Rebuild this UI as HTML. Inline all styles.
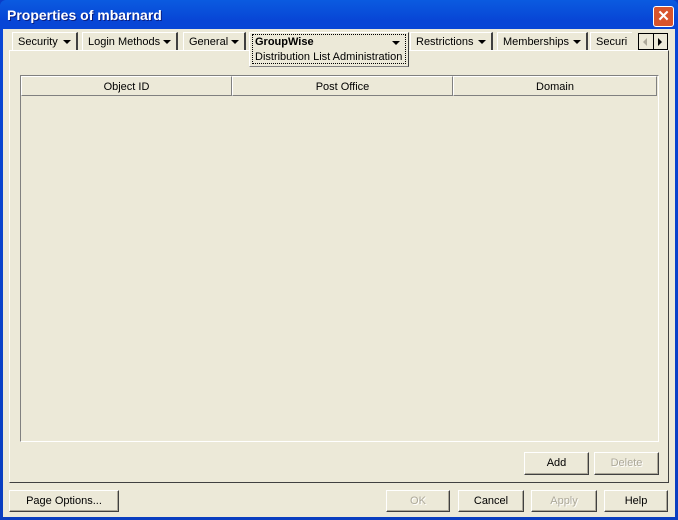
<html><head><style>
body{margin:0;width:678px;height:520px;overflow:hidden;font-family:"Liberation Sans",sans-serif;font-size:11px;background:#0a3cc8}
.win{position:absolute;left:0;top:0;width:678px;height:520px;background:linear-gradient(#0a5be0,#0846d6 20px,#0a3ec0);border-radius:6px 6px 0 0}
.title{position:absolute;left:7px;top:7px;color:#fff;font-weight:bold;font-size:14px;text-shadow:1px 1px #0a1e80}
.close{position:absolute;left:653px;top:6px;width:19px;height:19px;background:#d8542c;border:1px solid #fff;border-radius:3px;color:#fff;font-size:15px;text-align:center;line-height:19px;font-weight:bold}
.client{position:absolute;left:3px;top:29px;width:672px;height:488px;background:#ece9d8}
.abs{position:absolute}
.tab{position:absolute;top:3px;height:18px;border:1px solid #fff;border-right:2px solid #404040;border-bottom:none;background:#ece9d8;line-height:18px;padding-left:5px;box-sizing:border-box}
.tri{display:inline-block;width:0;height:0;border-left:4px solid transparent;border-right:4px solid transparent;border-top:4px solid #000;position:absolute;right:5px;top:7px}
.btn{position:absolute;background:#ece9d8;border:1px solid;border-color:#fff #404040 #404040 #fff;box-shadow:inset -1px -1px #aca899;text-align:center;box-sizing:border-box}
.hdr{position:absolute;top:0;height:20px;line-height:20px;text-align:center;border:1px solid;border-color:#fff #808080 #808080 #fff;box-sizing:border-box;background:#ece9d8}
.dis{color:#aca899;text-shadow:1px 1px #fff}
</style></head><body><div class="win">
<div class="title">Properties of mbarnard</div><div class="close">✕</div>
<div class="client">
<div class="abs" style="left:6px;top:21px;width:660px;height:433px;border:1px solid;border-color:#fff #404040 #404040 #fff;box-sizing:border-box"></div>
<div class="tab" style="left:9px;width:66px">Security<span class="tri"></span></div>
<div class="tab" style="left:79px;width:96px">Login Methods<span class="tri"></span></div>
<div class="tab" style="left:180px;width:63px">General<span class="tri"></span></div>
<div class="abs" style="left:246px;top:3px;width:160px;height:35px;background:#ece9d8;border:1px solid #fff;border-right:1px solid #404040;border-bottom:1px solid #808080;box-sizing:border-box"><div style="position:absolute;left:2px;top:1px;right:2px;bottom:2px;border:1px dotted #000"></div><b style="position:absolute;left:5px;top:3px">GroupWise</b><span class="tri" style="top:8px;right:8px"></span><span style="position:absolute;left:5px;top:18px">Distribution List Administration</span></div>
<div class="tab" style="left:407px;width:83px">Restrictions<span class="tri"></span></div>
<div class="tab" style="left:494px;width:91px">Memberships<span class="tri"></span></div>
<div class="tab" style="left:587px;width:42px;overflow:hidden;border-right:none">Securi</div>
<div class="abs" style="left:635px;top:4px;width:30px;height:17px;border:1px solid #000;background:#ece9d8;box-sizing:border-box"><div class="abs" style="left:14px;top:0;width:1px;height:15px;background:#000"></div>
<div class="abs" style="left:4px;top:4px;border-right:4px solid #aca899;border-top:4px solid transparent;border-bottom:4px solid transparent"></div>
<div class="abs" style="left:19px;top:4px;border-left:4px solid #000;border-top:4px solid transparent;border-bottom:4px solid transparent"></div></div>
<div class="abs" style="left:17px;top:46px;width:639px;height:367px;border:1px solid;border-color:#808080 #fff #fff #808080;box-sizing:border-box">
<div class="hdr" style="left:0;width:211px">Object ID</div>
<div class="hdr" style="left:211px;width:221px">Post Office</div>
<div class="hdr" style="left:432px;width:204px">Domain</div></div>
<div class="btn" style="left:521px;top:423px;width:65px;height:23px;line-height:21px">Add</div>
<div class="btn dis" style="left:591px;top:423px;width:65px;height:23px;line-height:21px">Delete</div>
<div class="btn" style="left:6px;top:461px;width:110px;height:22px;line-height:20px">Page Options...</div>
<div class="btn dis" style="left:383px;top:461px;width:64px;height:22px;line-height:20px">OK</div>
<div class="btn" style="left:455px;top:461px;width:66px;height:22px;line-height:20px">Cancel</div>
<div class="btn dis" style="left:528px;top:461px;width:66px;height:22px;line-height:20px">Apply</div>
<div class="btn" style="left:601px;top:461px;width:64px;height:22px;line-height:20px">Help</div>
</div></div></body></html>
